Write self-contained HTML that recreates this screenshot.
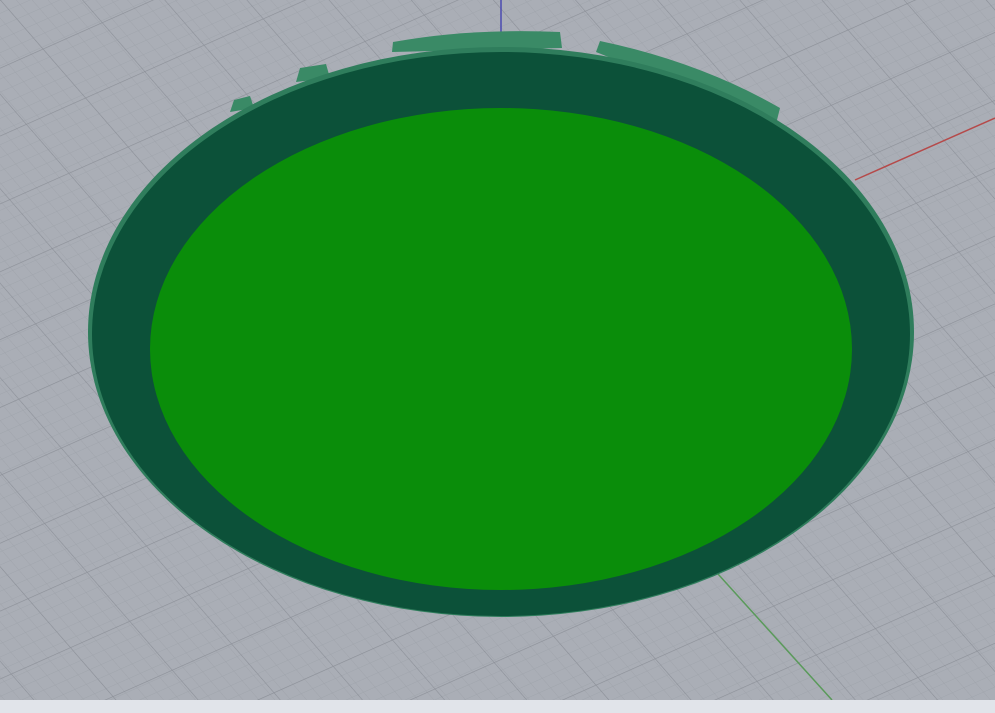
<!DOCTYPE html>
<html><head><style>
html,body{margin:0;padding:0;width:995px;height:713px;overflow:hidden;background:#aaaeb6;}
</style></head><body>
<svg width="995" height="713" viewBox="0 0 995 713" xmlns="http://www.w3.org/2000/svg">
<defs>
<pattern id="pa" width="12" height="12" patternUnits="userSpaceOnUse" patternTransform="rotate(-41)">
<line x1="0" y1="0" x2="0" y2="12" stroke="#9ea2aa" stroke-width="0.8"/>
</pattern>
<pattern id="pb" width="12" height="12" patternUnits="userSpaceOnUse" patternTransform="rotate(-24)">
<line x1="0" y1="0" x2="12" y2="0" stroke="#9ea2aa" stroke-width="0.8"/>
</pattern>
<pattern id="pA" width="62" height="62" patternUnits="userSpaceOnUse" patternTransform="rotate(-41)">
<line x1="0" y1="0" x2="0" y2="62" stroke="#8c9098" stroke-width="1.2"/>
</pattern>
<pattern id="pB" width="62" height="62" patternUnits="userSpaceOnUse" patternTransform="rotate(-24)">
<line x1="0" y1="0" x2="62" y2="0" stroke="#8c9098" stroke-width="1.2"/>
</pattern>
</defs>
<rect width="995" height="700" fill="#aaaeb6"/>
<rect width="995" height="700" fill="url(#pa)"/>
<rect width="995" height="700" fill="url(#pb)"/>
<rect width="995" height="700" fill="url(#pA)"/>
<rect width="995" height="700" fill="url(#pB)"/>
<line x1="501" y1="0" x2="501" y2="32" stroke="#4a4ab0" stroke-width="1.5"/>
<line x1="855" y1="180" x2="995" y2="118" stroke="#b54a4a" stroke-width="1.5"/>
<line x1="718" y1="574" x2="832" y2="700" stroke="#5a9a5a" stroke-width="1.5"/>
<path d="M392 52 L393 42 Q470 28 560 32 L562 48 Z" fill="#3a8a66"/>
<path d="M596 52 L600 41 Q700 62 780 108 L776 124 Z" fill="#3a8a66"/>
<path d="M230 112 L234 100 L250 96 L254 108 Z" fill="#3a8a66"/>
<path d="M296 82 L300 68 L326 64 L330 78 Z" fill="#3a8a66"/>
<ellipse cx="501" cy="332" rx="413" ry="285" fill="#2f7d5c"/>
<ellipse cx="501" cy="334" rx="409" ry="282" fill="#0c5139"/>
<ellipse cx="501" cy="349" rx="351" ry="241" fill="#0a8d0a"/>
<rect x="0" y="700" width="995" height="13" fill="#e1e4ea"/>
</svg>
</body></html>
